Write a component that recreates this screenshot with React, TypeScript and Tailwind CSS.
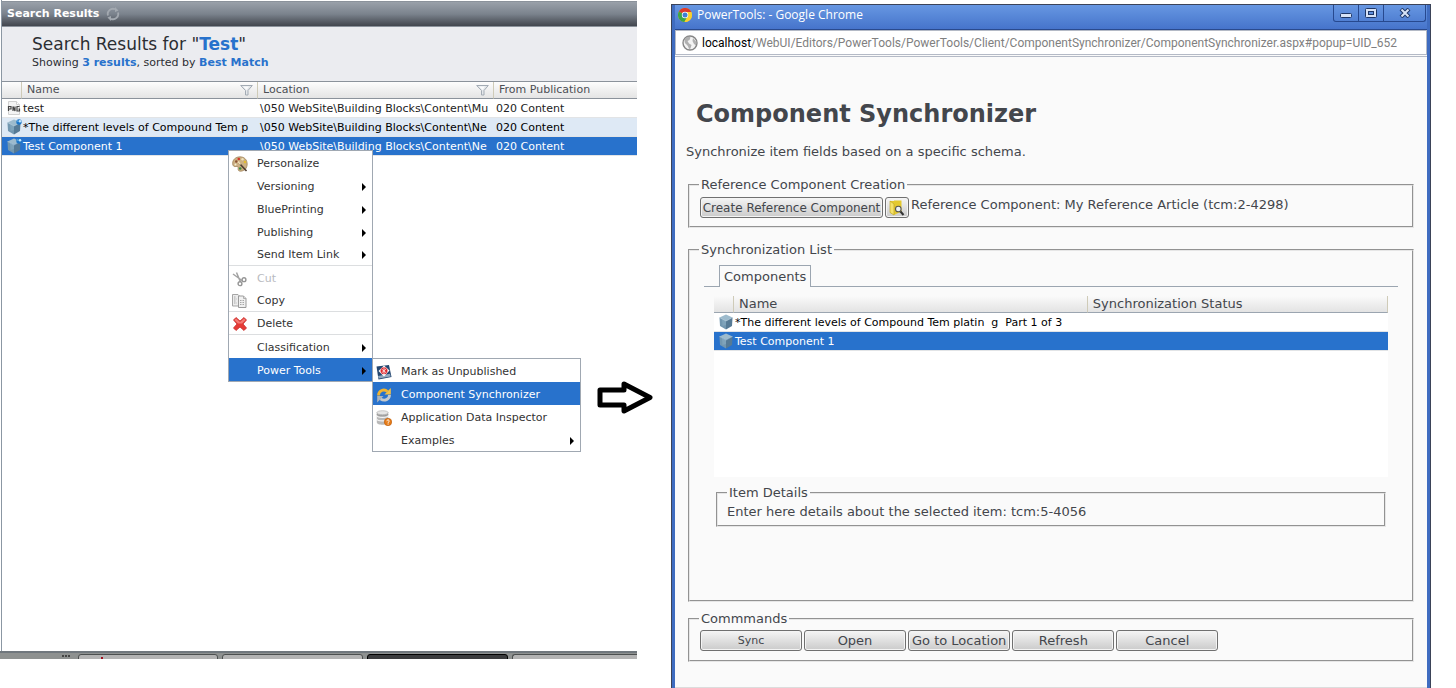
import type { ReactNode } from "react";

const rows = [
  { icon: "png", name: "test", location: "\\050 WebSite\\Building Blocks\\Content\\Mu", from: "020 Content", tone: "bg-white text-[#222]" },
  { icon: "cube", name: "*The different levels of Compound Tem p", location: "\\050 WebSite\\Building Blocks\\Content\\Ne", from: "020 Content", tone: "bg-[#dee9f5] text-black" },
  { icon: "cube", name: "Test Component 1", location: "\\050 WebSite\\Building Blocks\\Content\\Ne", from: "020 Content", tone: "bg-[#2872cc] text-white" },
];

function Cube({ badge = false }: { badge?: boolean }) {
  return (
    <svg width="16" height="16" viewBox="0 0 16 16" aria-hidden="true" className="block shrink-0">
      <path d="M8 .5 14.500 3.500 8 7 1.500 3.500Z" fill="#9dbbcd" />
      <path d="M1.500 3.500 8 7v8.500L2 12Z" fill="#7297b0" />
      <path d="M14.500 3.500 8 7v8.500l6-3.500Z" fill="#567a95" />
      <path d="M4 5 8 7v4L4.500 12Z" fill="#88abc2" opacity=".6" />
      <path d="M1.500 3.500 8 7l6.500-3.500" fill="none" stroke="#b9d0de" strokeWidth=".5" />
      {badge && (
        <g>
          <circle cx="13" cy="3" r="2.700" fill="#1c76c8" />
          <circle cx="14" cy="2.200" r="1.300" fill="#c3e5fb" />
          <circle cx="11.800" cy="2" r=".7" fill="#74b9ec" />
        </g>
      )}
    </svg>
  );
}

function PngIcon() {
  return (
    <svg width="14" height="16" viewBox="0 0 14 16" aria-hidden="true" className="block">
      <path d="M1.500 1.500h8l3 3v10h-11Z" fill="#f4f4f4" stroke="#d0d0d0" />
      <path d="M9.500 1.500v3h3" fill="#fff" stroke="#d0d0d0" />
      <path d="M1.500 11V6.500H4V9H1.500M6 11V6.500l2 4.500V6.500M12.500 6.500H10V11h2.500V9h-1" fill="none" stroke="#444" strokeWidth="1.200" />
    </svg>
  );
}

function Funnel() {
  return (
    <svg width="13" height="11" viewBox="0 0 13 11" aria-hidden="true" className="block">
      <path d="M.7.500h11.600L8 5.500v4.500H5.500V5.500Z" fill="#e4e7ea" stroke="#a3abb4" />
      <path d="M3 1.500h6L6.500 5Z" fill="#fafbfc" />
    </svg>
  );
}

function RefreshIcon() {
  return (
    <svg width="14" height="14" viewBox="0 0 14 14" aria-hidden="true" className="block">
      <path d="M2 8.500A5.200 5.200 0 0 1 9 2.200M12 5.500A5.200 5.200 0 0 1 5 11.800" fill="none" stroke="#a3a9b0" strokeWidth="1.800" />
      <path d="M9 0v5l3.500-1.500ZM5 14V9L1.500 10.500Z" fill="#a3a9b0" />
    </svg>
  );
}

function Palette() {
  return (
    <svg width="16" height="16" viewBox="0 0 16 16" aria-hidden="true">
      <path d="M8 .8C3.500.8.600 3.800.600 7.500c0 2.500 1.600 3.500 3.400 3 1.600-.4 2.400.4 2.100 2-.3 2 .9 2.900 2.900 2.700 3.700-.4 6.200-3 6.200-7.200C15.200 3.800 12.300.8 8 .8Z" fill="#cbb083" stroke="#997c51" strokeWidth=".7" />
      <circle cx="4.300" cy="5.500" r="1.300" fill="#8b5132" />
      <circle cx="6.800" cy="3" r="1.300" fill="#d63829" />
      <circle cx="10.500" cy="3.200" r="1.200" fill="#eee1b8" />
      <circle cx="13" cy="6" r="1.200" fill="#e5bd2c" />
      <circle cx="8.200" cy="12.500" r="1.300" fill="#3e8a41" />
      <circle cx="3.500" cy="8.500" r="1" fill="#f5ecd5" />
      <path d="m7 7 7.500 8" stroke="#4c3a2e" strokeWidth="1.600" />
      <path d="m6 5.500 2.500 3" stroke="#f3dfb6" strokeWidth="1.500" />
    </svg>
  );
}

function Scissors() {
  return (
    <svg width="16" height="16" viewBox="0 0 16 16" aria-hidden="true" fill="none">
      <path d="m1 3 9 6.500M4.500 1.500 8.500 11" stroke="#a3a3a3" strokeWidth="1.500" />
      <circle cx="12" cy="8.700" r="1.900" stroke="#959595" strokeWidth="1.400" />
      <circle cx="8" cy="12.700" r="1.900" stroke="#959595" strokeWidth="1.400" />
    </svg>
  );
}

function CopyIcon() {
  return (
    <svg width="16" height="16" viewBox="0 0 16 16" aria-hidden="true">
      <path d="M.500 1.500H6l2 2v9.500H.500Z" fill="#ececec" stroke="#a5a5a5" />
      <path d="M6.500 3h5l2.500 2.500v9H6.500Z" fill="#f1f1f1" stroke="#9b9b9b" />
      <path d="M11.500 3v2.500H14" fill="#d8d8d8" stroke="#9b9b9b" strokeWidth=".7" />
      <path d="M2 4h2M2 6h3M2 8h2M2 10h3M8 7.500h5M8 9.500h5M8 11.500h5" stroke="#a8a8a8" strokeDasharray="1.500 1" />
    </svg>
  );
}

function DeleteIcon() {
  return (
    <svg width="16" height="16" viewBox="0 0 16 16" aria-hidden="true">
      <path d="M4 1.500 8 5l4-3.500L14.500 4 11 8l3.500 4-2.500 2.500L8 11l-4 3.500L1.500 12 5 8 1.500 4Z" fill="#e53a36" stroke="#c62f2d" strokeWidth=".8" strokeLinejoin="round" />
      <path d="M4 2.500 8 6l4-3.500L13.500 4 10 7.500H6L2.500 4Z" fill="#f47a74" />
    </svg>
  );
}

function UnpublishIcon() {
  return (
    <svg width="16" height="16" viewBox="0 0 16 16" aria-hidden="true">
      <path d="m.500 2.500 12.500-1.500L15.500 13 2.500 15.500Z" fill="#24466f" />
      <path d="m2 12 12-2.200.7 2.700L2.800 14.500Z" fill="#93a9bf" />
      <path d="m2.500 7 5.500-5.500L13.500 6.500 8 12.500Z" fill="#fff" />
      <circle cx="8" cy="6.800" r="3.500" fill="#e02a2f" />
      <path d="m5.500 5 5 4M10.500 4.500l-5 4.500M8 3.500v7" stroke="#fff" strokeWidth=".7" />
    </svg>
  );
}

function SyncIcon() {
  return (
    <svg width="16" height="16" viewBox="0 0 16 16" aria-hidden="true" fill="none">
      <path d="M2.500 8.500C2.500 3.500 8 1.500 11.500 4.500" stroke="#f2b42f" strokeWidth="2.800" />
      <path d="M14.800 1v6.500H8.500Z" fill="#f5c042" />
      <path d="M13.500 8c0 4.500-5 6.500-9 3.800" stroke="#c5c9cc" strokeWidth="2.800" />
      <path d="M1.200 15.500V9h6.300Z" fill="#aeb4b9" />
    </svg>
  );
}

function DataIcon() {
  return (
    <svg width="16" height="16" viewBox="0 0 16 16" aria-hidden="true">
      <path d="M.800 2.500v10c0 3 11.400 3 11.400 0v-10Z" fill="#b9b9b9" />
      <path d="M.800 5.500c0 2.500 11.400 2.500 11.400 0M.800 9c0 2.500 11.400 2.500 11.400 0" fill="none" stroke="#f5f5f5" strokeWidth="1.100" />
      <path d="M.800 4c0 2.500 11.400 2.500 11.400 0" fill="none" stroke="#888" strokeWidth=".7" />
      <ellipse cx="6.500" cy="2.700" rx="5.700" ry="2" fill="#e6e6e6" stroke="#a7a7a7" strokeWidth=".6" />
      <circle cx="12" cy="12" r="3.700" fill="#e77c17" stroke="#b85b0c" strokeWidth=".6" />
      <path d="M10.800 11.200c0-1.800 2.700-1.500 2.400 0-.1.600-1.100.7-1.100 1.600M12.100 13.500v1" fill="none" stroke="#fff" />
    </svg>
  );
}

function MenuItem({ label, icon, submenu, active, disabled, rule, children }: {
  label: string; icon?: ReactNode; submenu?: boolean; active?: boolean; disabled?: boolean; rule?: boolean; children?: ReactNode;
}) {
  const tone = active ? "bg-[#2872cc] text-white" : disabled ? "text-[#b9bbbf]" : "text-[#333]";
  return (
    <li role="none" className="relative">
      <button type="button" role="menuitem" disabled={disabled} className={`flex h-[23px] w-full items-center pt-[2px] pr-[6px] pl-[3px] text-left ${tone} ${rule ? "border-b border-[#dcdee0]" : ""}`}>
        <span className="flex w-[25px] shrink-0">{icon}</span>
        <span className="grow whitespace-nowrap">{label}</span>
        {submenu && (
          <svg width="4" height="8" viewBox="0 0 4 8" aria-hidden="true"><path d="M0 0v8l4-4Z" fill="#000" /></svg>
        )}
      </button>
      {children}
    </li>
  );
}

function ContextMenu() {
  return (
    <ul role="menu" className="absolute top-[150px] left-[228px] w-[145px] border border-[#a0a8b2] bg-white text-[11px]">
      <MenuItem label="Personalize" icon={<Palette />} />
      <MenuItem label="Versioning" submenu />
      <MenuItem label="BluePrinting" submenu />
      <MenuItem label="Publishing" submenu />
      <MenuItem label="Send Item Link" submenu rule />
      <MenuItem label="Cut" icon={<Scissors />} disabled />
      <MenuItem label="Copy" icon={<CopyIcon />} rule />
      <MenuItem label="Delete" icon={<DeleteIcon />} rule />
      <MenuItem label="Classification" submenu />
      <MenuItem label="Power Tools" submenu active>
        <ul role="menu" className="absolute top-0 left-full w-[209px] border border-[#a0a8b2] bg-white">
          <MenuItem label="Mark as Unpublished" icon={<UnpublishIcon />} />
          <MenuItem label="Component Synchronizer" icon={<SyncIcon />} active />
          <MenuItem label="Application Data Inspector" icon={<DataIcon />} />
          <MenuItem label="Examples" submenu />
        </ul>
      </MenuItem>
    </ul>
  );
}

const headCell = "h-[17px] border-b border-[#8b929b] bg-linear-to-b from-[#fdfdfd] to-[#e4e4e4] p-0 text-left font-normal text-[#4c4f55]";
const bodyCell = "border-b border-[#e2e4e6] p-0 pt-[2px]";

function SearchPane() {
  return (
    <section className="relative mb-[29px] flex min-w-0 flex-col">
      <div className="ml-px flex grow flex-col border-l border-[#8b97a3]">
        <header className="mt-px flex h-[26px] items-center gap-[7px] border-t border-b border-[#8b929b] bg-linear-to-b from-[#9aa1aa] from-0% via-[#7b838d] via-50% to-[#42464e] to-100% pl-[5px] text-white">
          <h2 className="text-[11px] font-bold">Search Results</h2>
          <button type="button" aria-label="Refresh"><RefreshIcon /></button>
        </header>
        <div className="h-[54px] bg-[#ebecf0] pt-[6px] pl-[30px] text-[#2b2e33]">
          <p className="text-[17px] leading-[22px]">Search Results for "<b className="text-[#2872cc]">Test</b>"</p>
          <p className="text-[11px] leading-4">Showing <b className="text-[#2872cc]">3 results</b>, sorted by <b className="text-[#2872cc]">Best Match</b></p>
        </div>
        <table className="w-full table-fixed border-separate border-spacing-0 border-t border-[#8b929b] text-[11px]">
          <colgroup><col className="w-[20px]" /><col className="w-[236px]" /><col className="w-[236px]" /><col /></colgroup>
          <thead>
            <tr>
              <th className={`${headCell} border-r border-r-[#cfcbb8]`} aria-label="Type" />
              <th className={`${headCell} border-r border-r-[#cfcbb8]`}>
                <div className="flex items-center justify-between pr-1 pl-[5px]">Name<Funnel /></div>
              </th>
              <th className={`${headCell} border-r border-r-[#cfcbb8]`}>
                <div className="flex items-center justify-between pr-1 pl-[5px]">Location<Funnel /></div>
              </th>
              <th className={`${headCell} pl-[5px]`}>From Publication</th>
            </tr>
          </thead>
          <tbody>
            {rows.map((r) => (
              <tr key={r.name} className={r.tone}>
                <td className="h-[19px] border-b border-[#e2e4e6] p-0"><div className="flex justify-center pl-1">{r.icon === "png" ? <PngIcon /> : <Cube badge />}</div></td>
                <td className={`${bodyCell} pl-px whitespace-pre`}>{r.name}</td>
                <td className={`${bodyCell} pl-[2px] whitespace-pre`}>{r.location}</td>
                <td className={`${bodyCell} pl-[2px]`}>{r.from}</td>
              </tr>
            ))}
          </tbody>
        </table>
        <div className="grow" />
      </div>
      <div className="flex h-[8px] gap-1 overflow-hidden border-t-2 border-[#70777d] bg-[#8e9190] pt-px">
        <div className="flex w-[74px] shrink-0 justify-end gap-px pt-px pr-1">
          <i className="size-[2px] bg-[#444]" /><i className="size-[2px] bg-[#444]" /><i className="size-[2px] bg-[#444]" />
        </div>
        <div className="h-4 w-[140px] shrink-0 rounded-t-[3px] border border-[#4c4f4f] bg-[#b3b3b3]"><i className="mt-[2px] ml-[22px] block size-[2px] bg-[#a01020]" /></div>
        <div className="h-4 w-[141px] shrink-0 rounded-t-[3px] border border-[#4c4f4f] bg-[#b3b3b3]" />
        <div className="h-4 w-[141px] shrink-0 rounded-t-[3px] border border-black bg-[#3a3b3d]" />
        <div className="h-4 grow rounded-tl-[3px] border border-r-0 border-[#4c4f4f] bg-[#b3b3b3]" />
      </div>
      <ContextMenu />
    </section>
  );
}

function ChromeLogo() {
  return (
    <svg width="14" height="14" viewBox="0 0 14 14" aria-hidden="true">
      <circle cx="7" cy="7" r="7" fill="#f9cf2e" />
      <path d="M7 7 .900 3.500A7 7 0 0 1 13.300 4H7Z" fill="#dc3a2c" />
      <path d="M7 7 .900 3.500A7 7 0 0 0 6.500 14L9.500 8.500Z" fill="#3da547" />
      <path d="M7 4h6.300A7 7 0 0 1 6.500 14L9.500 8.500Z" fill="#f9cf2e" />
      <circle cx="7" cy="7" r="3.200" fill="#fff" />
      <circle cx="7" cy="7" r="2.500" fill="#3f7fd4" />
    </svg>
  );
}

function Globe() {
  return (
    <svg width="16" height="16" viewBox="0 0 16 16" aria-hidden="true" className="shrink-0">
      <circle cx="8" cy="8" r="7" fill="#f3f3f3" stroke="#858585" strokeWidth="1.400" />
      <path d="M3 3.500C5 1.500 7.500 1.500 8.500 2.500L7.500 5 5.500 6 7 8.500 9.500 10 8.500 13.500 7 14C6.500 11.500 5.500 10.500 4.500 9.500 2.500 8.500 2 6 3 3.500ZM11 3l3 3.500v4l-2-1.500-1.500-3Z" fill="#b0b0b0" />
    </svg>
  );
}

function FolderSearch() {
  return (
    <svg width="16" height="16" viewBox="0 0 16 16" aria-hidden="true">
      <path d="M1 1h4V.5h7.500v11L5 15l-4-2.500Z" fill="#e4c92f" />
      <path d="m1 1 4 3v11l-4-2.500Z" fill="#f5e26a" stroke="#b9a01f" strokeWidth=".6" />
      <circle cx="9.300" cy="9" r="2.800" fill="#eef4f7" stroke="#555" strokeWidth="1.100" />
      <path d="m11.500 11.500 3 3.500" stroke="#333" strokeWidth="2" />
    </svg>
  );
}

const fieldset = "min-w-0 border-2 border-[#e6e6e6] [border-style:groove]";
const buttonFace = "flex h-[21px] items-center justify-center rounded-[3px] border border-[#707070] bg-linear-to-b from-[#f5f5f5] from-0% via-[#e0e0e0] via-50% to-[#cbcbcb] to-100% whitespace-nowrap shadow-[inset_0_0_0_1px_#f4f4f4]";
const dialogHead = "h-[17px] border-b border-[#9ba5b0] bg-linear-to-b from-[#fafafa] to-[#e3e3e3] p-0 pl-[5px] text-left font-normal";
const captionButton = "flex h-[17px] items-center justify-center border-r border-b border-[#27498f] first:border-l first:rounded-bl-[3px] last:rounded-br-[3px]";

function TitleBar() {
  return (
    <header className="flex h-[24px] items-start justify-between bg-linear-to-b from-[#6797e2] to-[#4674cb] pr-px text-white">
      <div className="flex items-center gap-[5px] pt-[3px] pl-[3px]">
        <ChromeLogo />
        <h1 className="font-['Open_Sans',sans-serif] text-[12px] leading-[14px]">PowerTools: - Google Chrome</h1>
      </div>
      <div className="flex">
        <button type="button" aria-label="Minimize" className={`${captionButton} w-[26px]`}>
          <svg width="12" height="10" viewBox="0 0 12 10"><rect x=".500" y="5.500" width="11" height="4" rx="1" fill="#d7e3f7" stroke="#1f3766" /></svg>
        </button>
        <button type="button" aria-label="Maximize" className={`${captionButton} w-[25px]`}>
          <svg width="12" height="10" viewBox="0 0 12 10"><rect x=".500" y=".500" width="11" height="9" rx="1" fill="#d7e3f7" stroke="#1f3766" /><rect x="3.500" y="3.500" width="5" height="3" fill="#5e8edb" stroke="#1f3766" /></svg>
        </button>
        <button type="button" aria-label="Close" className={`${captionButton} w-[42px]`}>
          <svg width="12" height="10" viewBox="0 0 12 10"><path d="m2 1 8 8M10 1 2 9" stroke="#1f3766" strokeWidth="4" /><path d="m2.500 1.500 7 7M9.500 1.500l-7 7" stroke="#d7e3f7" strokeWidth="2" /></svg>
        </button>
      </div>
    </header>
  );
}

function Dialog() {
  return (
    <section className="mt-1 flex min-w-0 flex-col border-x border-t border-[#3b4358] bg-[#3f6cc0] px-[3px] text-[13px] leading-4 text-[#43464c]">
      <TitleBar />
      <div className="flex grow flex-col border-t border-[#2a4a8e] bg-[#fafafa]">
        <div className="flex h-[25px] items-center gap-1 border border-[#b4bac6] bg-white pl-[6px] font-[Roboto,sans-serif] text-[12px] whitespace-nowrap text-[#808080]">
          <Globe />
          <span><span className="text-black">localhost</span>/WebUI/Editors/PowerTools/PowerTools/Client/ComponentSynchronizer/ComponentSynchronizer.aspx#popup=UID_652</span>
        </div>
        <main className="mt-px grow border-t border-[#b4bac6] px-[13px]">
          <h2 className="mt-[41px] pl-2 text-[24px] leading-[32px] font-bold">Component Synchronizer</h2>
          <p className="-ml-[2px] mt-[14px]">Synchronize item fields based on a specific schema.</p>

          <fieldset className={`${fieldset} mt-[17px] px-[10px] pb-[8px]`}>
            <legend className="ml-[-1px] px-[2px]">Reference Component Creation</legend>
            <div className="flex items-start gap-[2px] pt-[4px]">
              <button type="button" className={`${buttonFace} w-[183px] text-[12px]`}>Create Reference Component</button>
              <button type="button" aria-label="Browse" className={`${buttonFace} w-[24px]`}><FolderSearch /></button>
              <span>Reference Component: My Reference Article (tcm:2-4298)</span>
            </div>
          </fieldset>

          <fieldset className={`${fieldset} mt-[14px] h-[360px] px-[14px]`}>
            <legend className="-ml-[5px] px-[2px]">Synchronization List</legend>
            <div role="tablist" className="mt-[7px] flex border-b border-[#9ba5b0] pl-[15px]">
              <button type="button" role="tab" aria-selected="true" className="-mb-px h-[22px] border border-b-0 border-[#9ba5b0] bg-[#fafafa] px-1">Components</button>
            </div>
            <div className="mx-[10px] mt-[9px] h-[181px] bg-white">
              <table className="w-full table-fixed border-separate border-spacing-0">
                <colgroup><col className="w-[20px]" /><col className="w-[52.5%]" /><col /></colgroup>
                <thead>
                  <tr>
                    <th className={`${dialogHead} border-r border-r-[#cfcbb8]`} aria-label="Type" />
                    <th className={`${dialogHead} border-r border-r-[#cfcbb8]`}>Name</th>
                    <th className={`${dialogHead} border-r border-r-[#cfcbb8]`}>Synchronization Status</th>
                  </tr>
                </thead>
                <tbody className="text-[11px]">
                  <tr className="text-black">
                    <td className="h-[19px] border-b border-[#e2e4e6] p-0 pl-1"><Cube /></td>
                    <td className={`${bodyCell} pl-px whitespace-pre`}>*The different levels of Compound Tem platin  g  Part 1 of 3</td>
                    <td className={bodyCell} />
                  </tr>
                  <tr className="bg-[#2872cc] text-white">
                    <td className="h-[19px] border-b border-[#e2e4e6] p-0 pl-1"><Cube /></td>
                    <td className={`${bodyCell} pl-px`}>Test Component 1</td>
                    <td className={bodyCell} />
                  </tr>
                </tbody>
              </table>
            </div>
            <fieldset className={`${fieldset} mx-3 mt-2 px-[9px] pb-[5px]`}>
              <legend className="px-[2px]">Item Details</legend>
              <p className="pt-[3px]">Enter here details about the selected item: tcm:5-4056</p>
            </fieldset>
          </fieldset>

          <fieldset className={`${fieldset} mt-[9px] px-[10px] pb-[9px]`}>
            <legend className="ml-[-1px] px-[2px]">Commmands</legend>
            <div className="flex gap-[2px] pt-[3px]">
              {["Sync", "Open", "Go to Location", "Refresh", "Cancel"].map((c) => (
                <button key={c} type="button" className={`${buttonFace} min-w-[102px] px-[3px] ${c === "Sync" ? "text-[11px]" : ""}`}>{c}</button>
              ))}
            </div>
          </fieldset>
        </main>
        <div className="border-t border-[#dcdcdc]" />
      </div>
    </section>
  );
}

export default function App() {
  return (
    <div className="relative grid min-h-screen grid-cols-[637fr_34fr_760fr_25fr] bg-white font-['DejaVu_Sans',Verdana,sans-serif] leading-4">
      <SearchPane />
      <div />
      <Dialog />
      <svg width="58" height="36" viewBox="0 0 58 36" aria-hidden="true" className="absolute top-[380px] left-[41%]">
        <path d="M3 10h24V4l26 13.500-26 13.500V25H3Z" fill="#fff" stroke="#000" strokeWidth="5" strokeLinejoin="round" />
      </svg>
    </div>
  );
}
